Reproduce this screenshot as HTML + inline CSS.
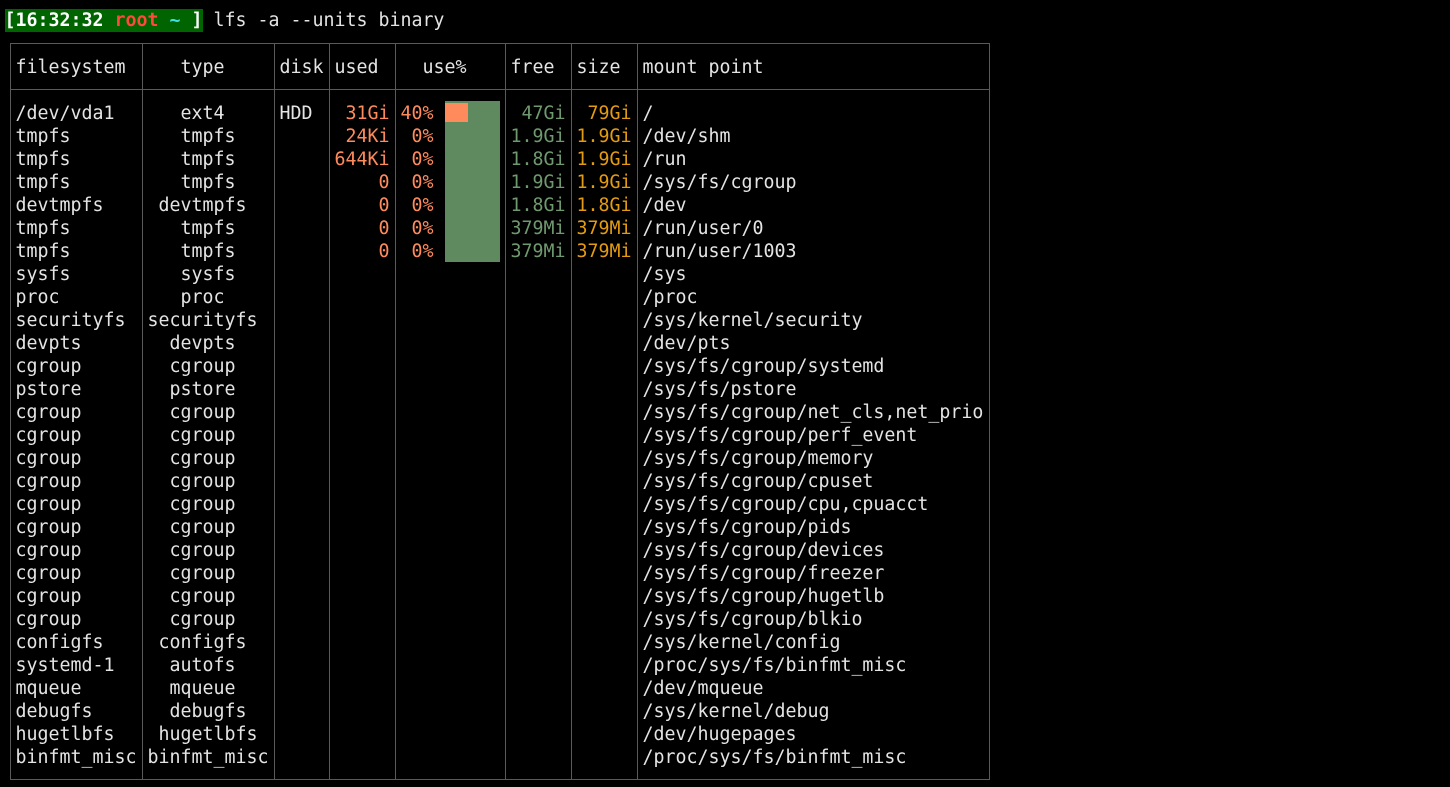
<!DOCTYPE html>
<html><head><meta charset="utf-8"><style>
html,body{margin:0;padding:0;background:#000;width:1450px;height:787px;overflow:hidden}
body{position:relative;font-family:"DejaVu Sans Mono","Liberation Mono",monospace;font-size:18.27px;color:#e4e4e4}
.row{position:absolute;left:4.5px;width:1000px;height:23px;line-height:23px;white-space:pre}
.row span{position:absolute;top:0;white-space:pre}
.c1{left:11px}
.t{left:143px;width:121px}
.dk{left:275px}
.u{left:330px;width:55px;text-align:right}
.p{left:396px;width:33px;text-align:right}
.f{left:506px;width:55px;text-align:right}
.s{left:572px;width:55px;text-align:right}
.m{left:638px}
.o{color:#ff8a5c}.gr{color:#6f9a6f}.y{color:#e39b12}
.v{position:absolute;top:43px;height:736px;width:1px;background:#5a5a5a}
.h{position:absolute;left:10px;width:980px;height:1px;background:#5a5a5a}
</style></head><body>
<div class="row" style="top:9px"><span style="left:0;background:#006400;color:#fff;font-weight:bold;padding-right:1px">[16:32:32 <b style="color:#ff4a3a">root</b> <b style="color:#3ee0e0">~</b> ]</span><span style="left:209px">lfs -a --units binary</span></div>

<div class="h" style="top:43px"></div>
<div class="h" style="top:89px"></div>
<div class="h" style="top:779px"></div>
<div class="v" style="left:10px"></div>
<div class="v" style="left:142px"></div>
<div class="v" style="left:274px"></div>
<div class="v" style="left:329px"></div>
<div class="v" style="left:395px"></div>
<div class="v" style="left:505px"></div>
<div class="v" style="left:571px"></div>
<div class="v" style="left:637px"></div>
<div class="v" style="left:989px"></div>

<div style="position:absolute;left:445px;top:101px;width:55px;height:161px;background:#5f8a5f"></div>
<div style="position:absolute;left:445px;top:103px;width:23px;height:19px;background:#ff8a5c"></div>

<div class="row" style="top:56px"><span class="c1">filesystem</span><span style="left:176px">type</span><span class="dk">disk</span><span style="left:330px">used</span><span style="left:418px">use%</span><span style="left:506px">free</span><span style="left:572px">size</span><span class="m">mount point</span></div>

<div class="row" style="top:102px"><span class="c1">/dev/vda1</span><span style="left:176px">ext4</span><span class="dk">HDD</span><span class="u o">31Gi</span><span class="p o">40%</span><span class="f gr">47Gi</span><span class="s y">79Gi</span><span class="m">/</span></div>
<div class="row" style="top:125px"><span class="c1">tmpfs</span><span style="left:176px">tmpfs</span><span class="u o">24Ki</span><span class="p o">0%</span><span class="f gr">1.9Gi</span><span class="s y">1.9Gi</span><span class="m">/dev/shm</span></div>
<div class="row" style="top:148px"><span class="c1">tmpfs</span><span style="left:176px">tmpfs</span><span class="u o">644Ki</span><span class="p o">0%</span><span class="f gr">1.8Gi</span><span class="s y">1.9Gi</span><span class="m">/run</span></div>
<div class="row" style="top:171px"><span class="c1">tmpfs</span><span style="left:176px">tmpfs</span><span class="u o">0</span><span class="p o">0%</span><span class="f gr">1.9Gi</span><span class="s y">1.9Gi</span><span class="m">/sys/fs/cgroup</span></div>
<div class="row" style="top:194px"><span class="c1">devtmpfs</span><span style="left:154px">devtmpfs</span><span class="u o">0</span><span class="p o">0%</span><span class="f gr">1.8Gi</span><span class="s y">1.8Gi</span><span class="m">/dev</span></div>
<div class="row" style="top:217px"><span class="c1">tmpfs</span><span style="left:176px">tmpfs</span><span class="u o">0</span><span class="p o">0%</span><span class="f gr">379Mi</span><span class="s y">379Mi</span><span class="m">/run/user/0</span></div>
<div class="row" style="top:240px"><span class="c1">tmpfs</span><span style="left:176px">tmpfs</span><span class="u o">0</span><span class="p o">0%</span><span class="f gr">379Mi</span><span class="s y">379Mi</span><span class="m">/run/user/1003</span></div>
<div class="row" style="top:263px"><span class="c1">sysfs</span><span style="left:176px">sysfs</span><span class="m">/sys</span></div>
<div class="row" style="top:286px"><span class="c1">proc</span><span style="left:176px">proc</span><span class="m">/proc</span></div>
<div class="row" style="top:309px"><span class="c1">securityfs</span><span style="left:143px">securityfs</span><span class="m">/sys/kernel/security</span></div>
<div class="row" style="top:332px"><span class="c1">devpts</span><span style="left:165px">devpts</span><span class="m">/dev/pts</span></div>
<div class="row" style="top:355px"><span class="c1">cgroup</span><span style="left:165px">cgroup</span><span class="m">/sys/fs/cgroup/systemd</span></div>
<div class="row" style="top:378px"><span class="c1">pstore</span><span style="left:165px">pstore</span><span class="m">/sys/fs/pstore</span></div>
<div class="row" style="top:401px"><span class="c1">cgroup</span><span style="left:165px">cgroup</span><span class="m">/sys/fs/cgroup/net_cls,net_prio</span></div>
<div class="row" style="top:424px"><span class="c1">cgroup</span><span style="left:165px">cgroup</span><span class="m">/sys/fs/cgroup/perf_event</span></div>
<div class="row" style="top:447px"><span class="c1">cgroup</span><span style="left:165px">cgroup</span><span class="m">/sys/fs/cgroup/memory</span></div>
<div class="row" style="top:470px"><span class="c1">cgroup</span><span style="left:165px">cgroup</span><span class="m">/sys/fs/cgroup/cpuset</span></div>
<div class="row" style="top:493px"><span class="c1">cgroup</span><span style="left:165px">cgroup</span><span class="m">/sys/fs/cgroup/cpu,cpuacct</span></div>
<div class="row" style="top:516px"><span class="c1">cgroup</span><span style="left:165px">cgroup</span><span class="m">/sys/fs/cgroup/pids</span></div>
<div class="row" style="top:539px"><span class="c1">cgroup</span><span style="left:165px">cgroup</span><span class="m">/sys/fs/cgroup/devices</span></div>
<div class="row" style="top:562px"><span class="c1">cgroup</span><span style="left:165px">cgroup</span><span class="m">/sys/fs/cgroup/freezer</span></div>
<div class="row" style="top:585px"><span class="c1">cgroup</span><span style="left:165px">cgroup</span><span class="m">/sys/fs/cgroup/hugetlb</span></div>
<div class="row" style="top:608px"><span class="c1">cgroup</span><span style="left:165px">cgroup</span><span class="m">/sys/fs/cgroup/blkio</span></div>
<div class="row" style="top:631px"><span class="c1">configfs</span><span style="left:154px">configfs</span><span class="m">/sys/kernel/config</span></div>
<div class="row" style="top:654px"><span class="c1">systemd-1</span><span style="left:165px">autofs</span><span class="m">/proc/sys/fs/binfmt_misc</span></div>
<div class="row" style="top:677px"><span class="c1">mqueue</span><span style="left:165px">mqueue</span><span class="m">/dev/mqueue</span></div>
<div class="row" style="top:700px"><span class="c1">debugfs</span><span style="left:165px">debugfs</span><span class="m">/sys/kernel/debug</span></div>
<div class="row" style="top:723px"><span class="c1">hugetlbfs</span><span style="left:154px">hugetlbfs</span><span class="m">/dev/hugepages</span></div>
<div class="row" style="top:746px"><span class="c1">binfmt_misc</span><span style="left:143px">binfmt_misc</span><span class="m">/proc/sys/fs/binfmt_misc</span></div>
</body></html>
